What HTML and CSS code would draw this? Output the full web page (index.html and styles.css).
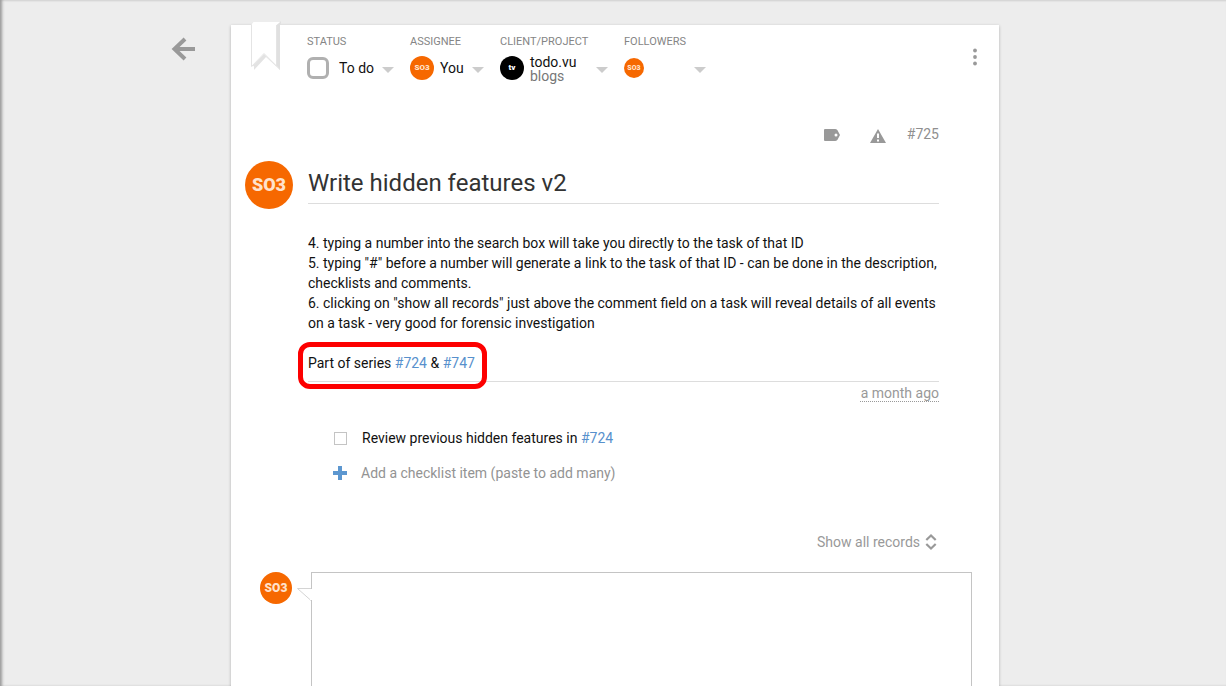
FILE: index.html
```html
<!DOCTYPE html>
<html lang="en">
<head>
<meta charset="utf-8">
<meta name="viewport" content="width=device-width, initial-scale=1">
<title>Write hidden features v2</title>
<link rel="stylesheet" href="styles.css">
</head>
<body>
<div class="page">
  <nav class="side">
    <button class="icon-button back" type="button" aria-label="Back">
      <svg width="24" height="24" viewBox="0 0 24 24" fill="none" stroke="#999" stroke-width="4"><path d="M24 12H5M14 2 3.500 12 14 22" stroke-width="4"/></svg>
    </button>
  </nav>
  <main class="card">
    <svg class="ribbon" width="32" height="52" viewBox="0 0 32 52" aria-hidden="true">
      <path d="M27 4 31 0v2l-1 2v45l-3-4z" fill="#e0e0e0"/>
      <path d="M2 45.500 14 33l16 14.500v1.500L16 36 4 49v-4z" fill="#e3e3e3"/>
      <path d="M1.500 45V3.500L3.500 1H30l-3.500 3v41L14 32.500z" fill="#fff"/>
      <path d="M1.500 3.500V45.500L14 32.500l12.500 12.500V4" fill="none" stroke="#e4e4e4"/>
    </svg>
    <header class="top">
      <div class="meta">
        <section class="field status">
          <h2 class="label">Status</h2>
          <button class="picker" type="button"><span class="status-box"></span><span class="value">To do</span><span class="caret"></span></button>
        </section>
        <section class="field assignee">
          <h2 class="label">Assignee</h2>
          <button class="picker" type="button"><span class="avatar small">SO3</span><span class="value">You</span><span class="caret"></span></button>
        </section>
        <section class="field client">
          <h2 class="label">Client/Project</h2>
          <button class="picker" type="button"><span class="avatar small dark">tv</span><span class="project"><span>todo.vu</span><span class="sub">blogs</span></span><span class="caret"></span></button>
        </section>
        <section class="field followers">
          <h2 class="label">Followers</h2>
          <button class="picker" type="button" aria-label="Followers"><span class="avatar tiny">SO3</span><span class="caret"></span></button>
        </section>
      </div>
      <button class="icon-button more" type="button" aria-label="More options">
        <svg width="6" height="18" viewBox="0 0 6 18" fill="#999"><circle cx="3" cy="2.500" r="1.900"/><circle cx="3" cy="9" r="1.900"/><circle cx="3" cy="15.500" r="1.900"/></svg>
      </button>
    </header>

    <div class="tools">
      <button class="icon-button tag" type="button" aria-label="Tags">
        <svg width="16" height="12" viewBox="0 0 16 12" fill="#999" fill-rule="evenodd"><path d="M1 0H11q1.500 0 2.500 1.200L16 6l-2.500 4.800Q12.500 12 11 12H1Q0 12 0 11V1Q0 0 1 0zM12 4.500a1.500 1.500 0 1 0 0 3 1.500 1.500 0 0 0 0-3z"/></svg>
      </button>
      <button class="icon-button alert" type="button" aria-label="Priority">
        <svg width="16" height="14" viewBox="0 0 16 14" fill="#999" fill-rule="evenodd"><path d="M8 0l8 14H0zM7 4.500v4.500h2V4.500zM7 10.500v2h2v-2z"/></svg>
      </button>
      <span class="number">#725</span>
    </div>

    <div class="heading">
      <span class="avatar large">SO3</span>
      <h1 class="title">Write hidden features v2</h1>
    </div>

    <div class="content">
      <div class="description">
        <p>4. typing a number into the search box will take you directly to the task of that ID<br>5. typing "#" before a number will generate a link to the task of that ID - can be done in the description, checklists and comments.<br>6. clicking on "show all records" just above the comment field on a task will reveal details of all events on a task - very good for forensic investigation</p>
        <p class="series">Part of series <a href="#724">#724</a> &amp; <a href="#747">#747</a></p>
      </div>
      <div class="age"><time>a month ago</time></div>
      <ul class="checklist">
        <li class="item"><input class="tick" type="checkbox" id="review"><label for="review">Review previous hidden features in <a href="#724">#724</a></label></li>
        <li><button class="add" type="button"><svg width="14" height="14" viewBox="0 0 14 14" aria-hidden="true"><path d="M5 0h4v5h5v4H9v5H5V9H0V5h5z" fill="#5c97d0"/></svg>Add a checklist item (paste to add many)</button></li>
      </ul>
      <button class="records" type="button">Show all records
        <svg width="12" height="18" viewBox="0 0 12 18" fill="none" stroke="#999" stroke-width="2.200" aria-hidden="true"><path d="M1.300 7 6 2.500 10.700 7M1.300 11 6 15.500l4.700-4.500"/></svg>
      </button>
    </div>

    <div class="comment">
      <span class="avatar medium">SO3</span>
      <div class="bubble">
        <svg class="tail" width="16" height="15" viewBox="0 0 16 15" aria-hidden="true"><path d="M15 1.500H1.500L15 13.500" fill="#fff" stroke="#d4d4d4"/><path d="M14 2h2v11h-2z" fill="#fff"/></svg>
        <textarea class="text" aria-label="Comment"></textarea>
      </div>
    </div>
  </main>
</div>
</body>
</html>
```
FILE: styles.css
```css
* {
  box-sizing: border-box;
}

body {
  margin: 0;
  font: 14px/20px Roboto, "Liberation Sans", sans-serif;
  color: #111;
  background: #ededed;
}

h1, h2, p, ul {
  margin: 0;
  padding: 0;
  font-weight: 400;
}

ul {
  list-style: none;
}

a {
  color: #5790cc;
  text-decoration: none;
}

button {
  padding: 0;
  border: 0;
  background: none;
  font: inherit;
  color: inherit;
  text-align: left;
  cursor: pointer;
}

svg {
  display: block;
  flex: none;
}

.page {
  display: grid;
  grid-template-columns: 1fr minmax(0, 768px) 1fr;
  height: 100vh;
  padding: 25px 0 0 4px;
  overflow: hidden;
  box-shadow: inset 3px 0 3px -1px #999, inset 0 2px 2px -1px #ddd;
}

.side {
  display: flex;
  justify-content: flex-end;
  align-items: flex-start;
  padding: 12px 36px 0 0;
}

.card {
  position: relative;
  background: #fff;
  box-shadow: 0 1px 3px rgba(0, 0, 0, 0.25);
}

.ribbon {
  position: absolute;
  top: -4px;
  left: 19px;
}

.top {
  display: flex;
  justify-content: space-between;
  padding: 10px 21px 0 76px;
}

.meta {
  display: flex;
  gap: 16px;
}

.field {
  display: flex;
  flex-direction: column;
  gap: 7px;
}

.status {
  width: 87px;
}

.assignee {
  width: 74px;
}

.client {
  width: 108px;
}

.followers {
  width: 82px;
}

.label {
  font-size: 11px;
  line-height: 14px;
  color: #858585;
  text-transform: uppercase;
  white-space: nowrap;
}

.picker {
  display: flex;
  align-items: center;
  gap: 6px;
  height: 24px;
  white-space: nowrap;
}

.status .picker {
  gap: 10px;
}

.status-box {
  flex: none;
  width: 22px;
  height: 22px;
  border: 3px solid #b0b0b0;
  border-radius: 6px;
}

.status .caret {
  margin-left: -2px;
}

.project {
  display: flex;
  flex-direction: column;
  padding-top: 2px;
  line-height: 14px;
}

.sub {
  color: #777;
}

.caret {
  margin: 3px 0 0 auto;
  border: 6px solid transparent;
  border-top-color: #ccc;
  border-bottom: 0;
}

.avatar {
  display: flex;
  flex: none;
  align-items: center;
  justify-content: center;
  border-radius: 50%;
  background: #f66800;
  color: #ffe2cc;
  font-weight: 900;
}

.tiny {
  width: 20px;
  height: 20px;
  font-size: 7px;
}

.small {
  width: 24px;
  height: 24px;
  font-size: 8px;
}

.medium {
  width: 32px;
  height: 32px;
  font-size: 12px;
}

.large {
  width: 48px;
  height: 48px;
  font-size: 18px;
}

.dark {
  background: #000;
  color: #fff;
}

.more {
  align-self: flex-start;
  padding-top: 13px;
}

.tools {
  display: flex;
  justify-content: flex-end;
  align-items: center;
  gap: 30px;
  margin-top: 44px;
  padding-right: 60px;
}

.tag {
  padding-top: 2px;
}

.alert {
  padding-top: 3px;
}

.number {
  margin-left: -9px;
  color: #8f8f8f;
}

.heading {
  display: flex;
  gap: 15px;
  margin-top: 17px;
  padding: 0 60px 0 14px;
}

.title {
  flex: 1;
  align-self: flex-start;
  padding: 6px 0 4px;
  border-bottom: 1px solid #ddd;
  font-size: 24px;
  line-height: 32px;
  color: #333;
}

.content {
  display: flex;
  flex-direction: column;
  padding: 24px 60px 0 77px;
}

.description {
  padding-bottom: 8px;
  border-bottom: 1px solid #ddd;
}

.series {
  position: relative;
  width: fit-content;
  margin-top: 20px;
}

.series::after {
  content: "";
  position: absolute;
  inset: -11px -12px -16px -10px;
  border: 5px solid #fd0000;
  border-radius: 12px;
  pointer-events: none;
}

.age {
  margin-top: 1px;
  text-align: right;
  color: #999;
}

.age time {
  text-decoration: underline dotted 1px;
  text-underline-offset: 3px;
  text-decoration-skip-ink: none;
}

.checklist {
  display: flex;
  flex-direction: column;
  gap: 15px;
  margin-top: 25px;
  padding-left: 25px;
}

.item {
  display: flex;
  align-items: center;
  gap: 15px;
  padding-left: 1px;
}

.tick {
  appearance: none;
  width: 13px;
  height: 13px;
  margin: 0;
  border: 1px solid #c4c4c4;
  background: #fff;
}

.add {
  display: flex;
  align-items: center;
  gap: 14px;
  color: #939393;
}

.records {
  display: flex;
  align-self: flex-end;
  align-items: center;
  gap: 5px;
  margin-top: 49px;
  padding-right: 2px;
  color: #999;
}

.comment {
  display: flex;
  align-items: flex-start;
  gap: 19px;
  margin-top: 20px;
  padding: 0 27px 0 29px;
}

.bubble {
  position: relative;
  flex: 1;
}

.text {
  display: block;
  width: 100%;
  height: 160px;
  padding: 8px;
  border: 1px solid #c4c4c4;
  background: #fff;
  font: inherit;
  resize: none;
}

.tail {
  position: absolute;
  top: 15px;
  left: -15px;
}
```
